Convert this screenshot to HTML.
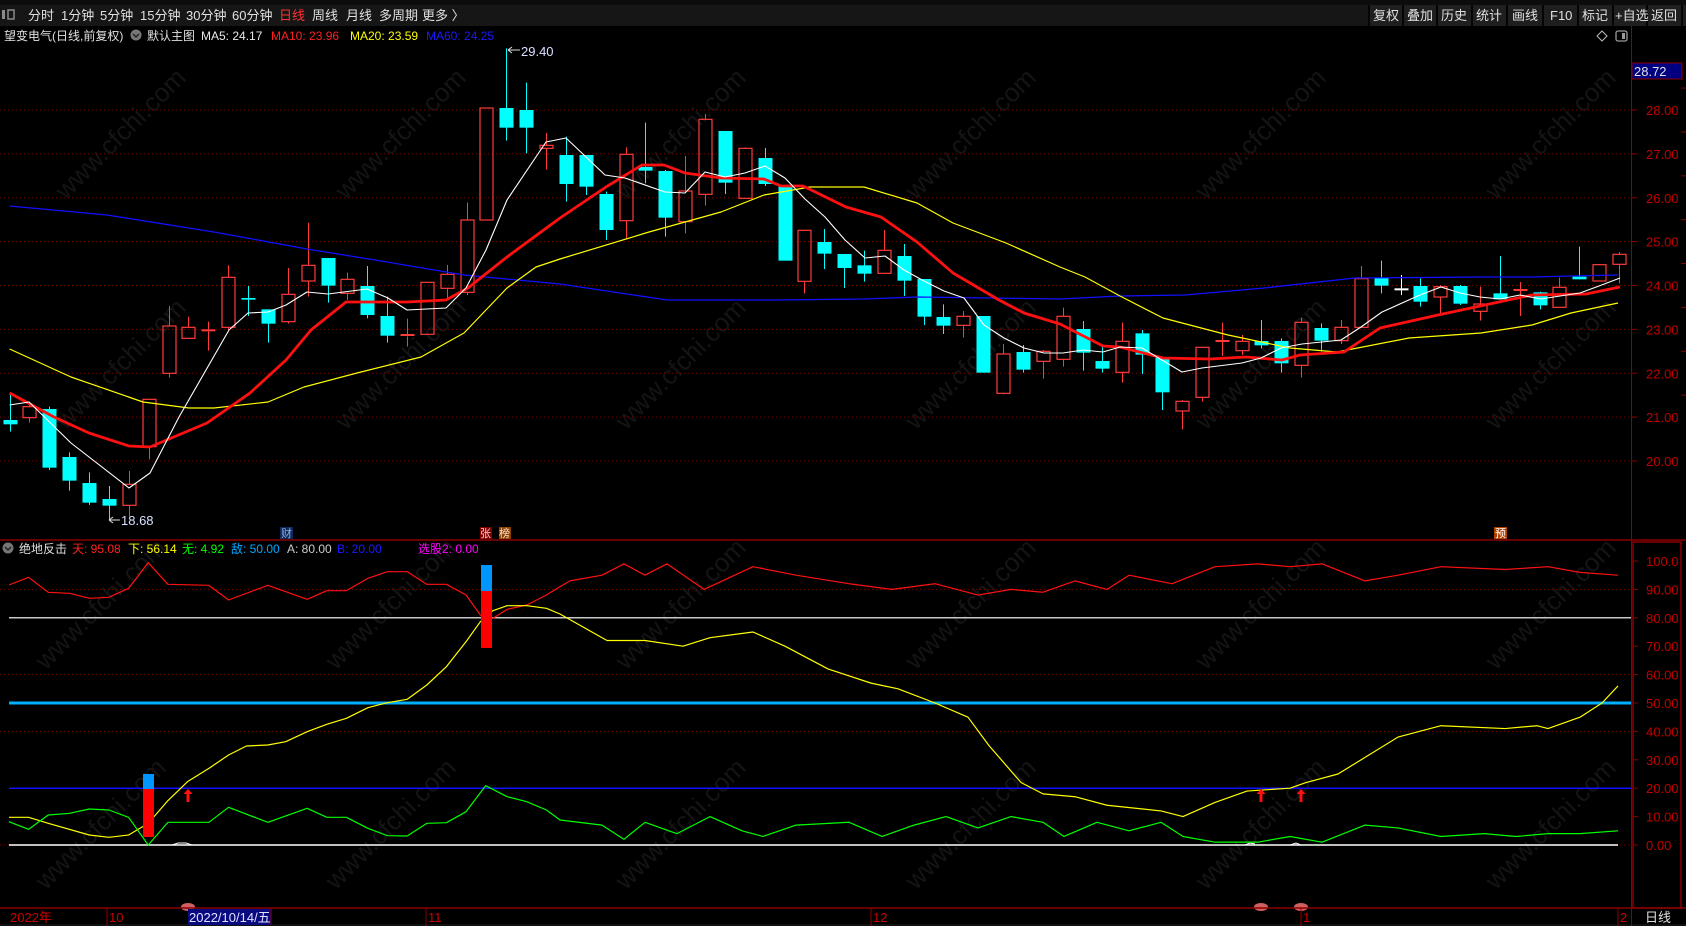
<!DOCTYPE html>
<html><head><meta charset="utf-8">
<style>
html,body{margin:0;padding:0;background:#000;width:1686px;height:926px;overflow:hidden}
svg{display:block}
text{font-family:"Liberation Sans","Noto Sans CJK SC",sans-serif}
</style></head><body>
<svg id="s" width="1686" height="926" viewBox="0 0 1686 926" xmlns="http://www.w3.org/2000/svg">
<rect width="1686" height="926" fill="#000"/>
<rect x="0" y="0" width="1686" height="5" fill="#0c0c0c"/>
<rect x="0" y="5" width="1686" height="21" fill="#161616"/>
<rect x="1369" y="5" width="317" height="21" fill="#1f1f1f"/>
<g stroke="#050505" stroke-width="2">
<line x1="1369" y1="5" x2="1369" y2="26"/><line x1="1403" y1="5" x2="1403" y2="26"/><line x1="1437" y1="5" x2="1437" y2="26"/><line x1="1472" y1="5" x2="1472" y2="26"/><line x1="1507" y1="5" x2="1507" y2="26"/><line x1="1543" y1="5" x2="1543" y2="26"/><line x1="1578" y1="5" x2="1578" y2="26"/><line x1="1613" y1="5" x2="1613" y2="26"/><line x1="1647" y1="5" x2="1647" y2="26"/><line x1="1682" y1="5" x2="1682" y2="26"/>
</g>
<g fill="#8a8a8a"><rect x="2" y="10" width="3" height="9"/><rect x="8" y="10" width="6" height="9" fill="none" stroke="#8a8a8a" stroke-width="1.5"/></g>
<g font-size="13" fill="#e0e0e0">
<text x="28" y="20">分时</text><text x="61" y="20">1分钟</text><text x="100" y="20">5分钟</text><text x="140" y="20">15分钟</text><text x="186" y="20">30分钟</text><text x="232" y="20">60分钟</text><text x="279" y="20" fill="#ff3030">日线</text><text x="312" y="20">周线</text><text x="346" y="20">月线</text><text x="379" y="20">多周期</text><text x="422" y="20">更多 〉</text>
<text x="1373" y="20">复权</text><text x="1407" y="20">叠加</text><text x="1441" y="20">历史</text><text x="1476" y="20">统计</text><text x="1512" y="20">画线</text><text x="1550" y="20">F10</text><text x="1582" y="20">标记</text><text x="1615" y="20">+自选</text><text x="1651" y="20">返回</text>
</g>
<g font-size="12">
<text x="4" y="40" fill="#e0e0e0">望变电气(日线,前复权)</text>
<circle cx="136" cy="35" r="5.5" fill="#777"/><path d="M133 34l3 3 3-3" stroke="#222" stroke-width="1.5" fill="none"/>
<text x="147" y="40" fill="#e0e0e0">默认主图</text>
<text x="201" y="40" fill="#e8e8e8">MA5: 24.17</text>
<text x="271" y="40" fill="#ff2020">MA10: 23.96</text>
<text x="350" y="40" fill="#ffff00">MA20: 23.59</text>
<text x="426" y="40" fill="#1a1aff">MA60: 24.25</text>
</g>
<path d="M1602 31l5 5-5 5-5-5z" fill="none" stroke="#bbb" stroke-width="1"/>
<rect x="1616" y="31" width="11" height="10" rx="2" fill="none" stroke="#999" stroke-width="1.3"/><rect x="1622" y="33" width="3" height="6" fill="#999"/>
<g id="wm" font-size="26" fill="#141414"></g>
<g id="grid"></g>
<g id="main"></g>
<g id="ind"></g>
<line x1="1631.5" y1="26" x2="1631.5" y2="926" stroke="#8b0000" stroke-width="1"/>
<line x1="0" y1="540" x2="1686" y2="540" stroke="#8b0000" stroke-width="1.5"/>
<rect x="1632" y="63" width="50" height="16" fill="#000080" stroke="#8b0000" stroke-width="1"/>
<text x="1634" y="76" font-size="13" fill="#e0e0e0">28.72</text>
<rect x="1633" y="542" width="48" height="366" fill="none" stroke="#8b0000" stroke-width="1.5"/>
<line x1="0" y1="908" x2="1686" y2="908" stroke="#8b0000" stroke-width="1.5"/>
<line x1="0" y1="925" x2="1686" y2="925" stroke="#222" stroke-width="1"/>
<g font-size="13" fill="#cc0000">
<text x="10" y="922">2022年</text>
<line x1="107" y1="908" x2="107" y2="926" stroke="#8b0000"/><text x="109" y="922">10</text>
<line x1="426" y1="908" x2="426" y2="926" stroke="#8b0000"/><text x="428" y="922">11</text>
<line x1="871" y1="908" x2="871" y2="926" stroke="#8b0000"/><text x="873" y="922">12</text>
<line x1="1301" y1="908" x2="1301" y2="926" stroke="#8b0000"/><text x="1303" y="922">1</text>
<line x1="1618" y1="908" x2="1618" y2="926" stroke="#8b0000"/><text x="1620" y="922">2</text>
</g>
<rect x="188" y="909" width="83" height="16" fill="#0a0a80"/><line x1="271" y1="909" x2="271" y2="925" stroke="#8b0000"/>
<text x="189" y="922" font-size="13" fill="#e0e0ff">2022/10/14/五</text>
<text x="1645" y="922" font-size="13" fill="#e0e0e0">日线</text>
<rect x="280" y="527" width="13" height="12" fill="#0a2a5a"/><text x="281" y="537" font-size="11" fill="#9ad">财</text>
<rect x="480" y="527" width="12" height="12" fill="#800000"/><text x="480" y="537" font-size="11" fill="#fcc">张</text>
<rect x="499" y="527" width="12" height="12" fill="#8a4000"/><text x="499" y="537" font-size="11" fill="#fdc">榜</text>
<rect x="1494" y="527" width="13" height="12" fill="#b04000"/><text x="1495" y="537" font-size="11" fill="#fff">预</text>
<path d="M508 50h12 M508 50l4-3 M508 50l4 3" stroke="#ddd" fill="none" stroke-width="1"/>
<text x="521" y="56" font-size="13" fill="#d8e0ff">29.40</text>
<path d="M109 520h11 M109 520l4-3 M109 520l4 3" stroke="#ddd" fill="none" stroke-width="1"/>
<text x="121" y="525" font-size="13" fill="#d8e0ff">18.68</text>
<g font-size="12">
<circle cx="8" cy="548" r="5.5" fill="#777"/><path d="M5 547l3 3 3-3" stroke="#222" stroke-width="1.5" fill="none"/>
<text x="19" y="553" fill="#e0e0e0">绝地反击</text>
<text x="72" y="553" fill="#ff2020">天: 95.08</text>
<text x="128" y="553" fill="#ffff00">下: 56.14</text>
<text x="182" y="553" fill="#00ff00">无: 4.92</text>
<text x="231" y="553" fill="#00a8ff">敌: 50.00</text>
<text x="287" y="553" fill="#cccccc">A: 80.00</text>
<text x="337" y="553" fill="#1a1aff">B: 20.00</text>
<text x="418" y="553" fill="#ff00ff">选股2: 0.00</text>
</g>
</svg>
<script>
(function(){
var NS="http://www.w3.org/2000/svg";
function el(p,t,a,txt){var e=document.createElementNS(NS,t);for(var k in a)e.setAttribute(k,a[k]);if(txt!=null)e.textContent=txt;p.appendChild(e);return e;}
var grid=document.getElementById('grid'),main=document.getElementById('main'),ind=document.getElementById('ind'),wm=document.getElementById('wm');
var wp=[[20,170],[300,170],[580,170],[870,170],[1160,170],[1450,170],[20,400],[300,400],[580,400],[870,400],[1160,400],[1450,400],[0,640],[290,640],[580,640],[870,640],[1160,640],[1450,640],[0,860],[290,860],[580,860],[870,860],[1160,860],[1450,860]];
wp.forEach(function(p){el(wm,'text',{x:p[0],y:p[1],transform:'rotate(-45 '+(p[0]+60)+' '+(p[1]-40)+')'},'www.cfchi.com');});
function py(p){return 110+(28-p)*43.875;}
for(var p=28;p>=20;p--){var y=py(p);el(grid,'line',{x1:0,y1:y,x2:1631,y2:y,stroke:'#7a0000','stroke-dasharray':'1 3'});
el(grid,'line',{x1:1631,y1:y,x2:1637,y2:y,stroke:'#8b0000'});
el(grid,'text',{x:1646,y:y+5,'font-size':13,fill:'#c00000'},p.toFixed(2));}
[21.5,22.5,23.5,24.5,25.5,26.5,27.5,28.5].forEach(function(p){el(grid,'line',{x1:1681,y1:py(p),x2:1686,y2:py(p),stroke:'#8b0000'});});
function iy(v){return 845-2.84*v;}
[100,90,80,70,60,50,40,30,20,10,0].forEach(function(v){var y=iy(v);
el(grid,'line',{x1:1633,y1:y,x2:1638,y2:y,stroke:'#8b0000'});
el(grid,'text',{x:1646,y:y+5,'font-size':13,fill:'#c00000'},v==100?'100.0':v.toFixed(2));});
[90,60,40,0].forEach(function(v){el(grid,'line',{x1:0,y1:iy(v),x2:1631,y2:iy(v),stroke:'#7a0000','stroke-dasharray':'1 3'});});
var C=[['d',1140,1153,1065,1175],['u',1100,1133,1085,1148],['d',1107,1283,1100,1290],['d',1251,1322,1237,1352],['d',1329,1388,1297,1395],['d',1377,1397,1338,1440],['u',1333,1396,1293,1430],['u',1078,1220,1078,1258],['u',858,1000,798,1013],['u',862,895,830,895],['u',868,874,845,932],['u',712,862,676,870],['d',774,779,738,828],['d',808,851,808,908],['u',763,845,684,851],['u',676,723,548,770],['d',654,737,654,788],['u',718,760,698,780],['d',738,825,678,835],['d',828,887,770,908],['u',882,889,836,920],['u',727,883,727,883],['u',703,745,675,780],['u',540,757,488,765],['u',204,540,204,540],['d',204,263,25,302],['d',210,263,128,340],['u',316,325,279,389],
['d',345,432,290,485],['d',345,440,345,465],['d',462,570,455,600],['u',343,542,322,598],['d',381,392,248,430],['d',393,533,390,590],['u',453,545,348,580],['u',238,463,222,497],['d',273,428,273,462],['u',325,475,322,475],['d',354,432,324,438],['d',440,662,440,662],['u',571,724,571,760],['d',606,641,567,687],['d',642,684,642,744],['d',676,701,632,725],['u',631,700,570,700],['d',648,722,612,768],['d',717,830,717,855],['d',831,857,793,882],['u',829,856,813,893],['d',828,998,828,998],['u',942,1060,912,1063],['d',936,989,915,998],['u',934,964,930,1016],['u',829,958,803,980],['d',867,938,843,992],['d',963,986,920,998],
['u',904,997,848,1028],['d',880,944,870,1002],['d',952,1057,952,1110],['u',1084,1113,1080,1168],['u',922,1072,922,1085],['u',900,905,848,948],['u',904,932,885,945],['d',903,916,840,925],['d',903,970,895,998],['u',847,976,833,1013],['d',864,902,850,935],['u',862,902,840,912],['u',716,862,678,862],['d',713,737,662,760],['w',745,748,705,765],['d',738,785,715,800],['u',740,771,735,820],['d',738,791,735,795],['u',792,814,740,842],['d',760,778,648,778],['u',747,751,726,828],['d',757,796,755,808],['u',742,802,713,802],['d',710,718,620,718],['u',674,723,672,723],['u',643,673,636,730]];
C.forEach(function(c,i){var x=Math.round(9.6+19.87*i)+0.5;var t=40+c[1]/3,b=40+c[2]/3,h=40+c[3]/3,l=40+c[4]/3;
var col=c[0]=='d'?'#00ffff':(c[0]=='w'?'#ffffff':'#ff3a3a');
var bh=Math.max(b-t,1.5);
if(c[0]=='d'){el(main,'line',{x1:x,y1:h,x2:x,y2:l,stroke:col,'stroke-width':1});el(main,'rect',{x:x-7,y:t,width:14,height:bh,fill:col});}
else{el(main,'line',{x1:x,y1:h,x2:x,y2:t,stroke:col});el(main,'line',{x1:x,y1:t+bh,x2:x,y2:l,stroke:col});
if(bh<3)el(main,'rect',{x:x-7,y:t,width:14,height:2,fill:col});else el(main,'rect',{x:x-6.5,y:t,width:13,height:bh,fill:'none',stroke:col,'stroke-width':1.2});}});
function pl(g,pts,col,w){el(g,'polyline',{points:pts.map(function(p){return p.join(',')}).join(' '),fill:'none',stroke:col,'stroke-width':w,'stroke-linejoin':'round'});}
pl(main,[[9.6,206],[107,215],[214,232],[307,249],[375,260],[464,275],[560,284],[667,300],[774,300],[864,299],[917,297],[989,298],[1060,299],[1120,296],[1185,295],[1264,288],[1355,278],[1481,277],[1531,277],[1571,276],[1618,275]],'#1010ff',1.3);
pl(main,[[9.6,349],[71,377],[143,402],[189,408],[214,408],[268,402],[304,387],[357,373],[421,357],[464,333],[507,288],[536,267],[560,259],[649,232],[721,212],[764,195],[810,187],[864,187],[917,203],[953,223],[1006,243],[1060,267],[1085,277],[1120,296],[1163,318],[1228,335],[1290,348],[1337,352],[1409,338],[1481,333],[1532,325],[1571,313],[1618,303]],'#ffff00',1.2);
pl(main,[[9.6,393],[54,417],[89,433],[129,446],[150,447],[207,423],[250,393],[286,360],[311,330],[346,302],[407,302],[446,300],[468,288],[507,257],[560,218],[606,187],[642,165],[664,165],[685,173],[721,178],[764,179],[781,186],[803,186],[846,207],[881,217],[917,242],[953,273],[999,300],[1024,313],[1060,324],[1103,346],[1120,347],[1163,358],[1210,359],[1246,357],[1282,360],[1300,355],[1344,352],[1380,328],[1438,315],[1499,302],[1532,295],[1586,294],[1620,287]],'#ff1010',2.8);
pl(main,[[9.6,405],[29,402],[71,443],[129,488],[150,473],[179,417],[229,330],[248,313],[268,312],[286,305],[307,292],[328,294],[367,289],[388,298],[407,310],[446,308],[466,288],[486,250],[507,200],[546,142],[566,138],[605,175],[625,178],[665,192],[685,193],[705,172],[725,177],[745,173],[765,166],[785,178],[805,199],[825,217],[845,240],[865,258],[885,256],[904,270],[924,281],[944,291],[964,298],[984,325],[1004,338],[1024,348],[1044,353],[1063,353],[1083,350],[1103,352],[1120,347],[1142,348],[1182,372],[1202,368],[1242,363],[1261,358],[1281,348],[1302,344],[1341,340],[1361,327],[1382,312],[1420,295],[1441,287],[1460,293],[1480,297],[1500,299],[1520,295],[1541,299],[1560,296],[1580,293],[1599,286],[1620,278]],'#ffffff',1.1);
el(ind,'line',{x1:9,y1:iy(80),x2:1631,y2:iy(80),stroke:'#c8c8c8','stroke-width':1.5});
el(ind,'line',{x1:9,y1:iy(50),x2:1631,y2:iy(50),stroke:'#00b0ff','stroke-width':3});
el(ind,'line',{x1:9,y1:iy(20),x2:1631,y2:iy(20),stroke:'#1010ff','stroke-width':1.5});
el(ind,'line',{x1:9,y1:iy(0),x2:1618,y2:iy(0),stroke:'#ffffff','stroke-width':1.5});
el(ind,'path',{d:'M172 845l6-2h8l6 2 M1245 845l5-2 5 1 M1290 845l6-2 5 2',stroke:'#fff',fill:'none'});
function zz(arr){return arr.map(function(p){return [p[0]/2.8,560+p[1]/3];});}
function rv(arr){return arr.map(function(p){return [p[0],iy(p[1])];});}
var red=zz([[25,75],[80,52],[135,97],[195,100],[250,115],[305,112],[360,85],[415,8],[470,73],[585,76],[640,120],[750,76],[860,118],[915,92],[970,92],[1030,55],[1085,35],[1140,35],[1195,73],[1250,73],[1305,105],[1345,165],[1380,175],[1420,148],[1475,135],[1530,105],[1568,80]]).concat(rv([[570,93],[602,95],[624,99],[645,95],[667,99],[704,90],[753,98],[796,95],[849,92],[892,90],[935,92],[978,88],[1011,90],[1043,89],[1075,93],[1107,90],[1129,95],[1172,92],[1215,98],[1258,99],[1290,98],[1322,99],[1365,93],[1398,95],[1441,98],[1505,97],[1548,98],[1580,96],[1618,95]]));
var yel=zz([[25,772],[80,772],[135,790],[250,825],[305,832],[360,825],[415,790],[470,722],[525,665],[585,625],[640,585],[690,558],[750,555],[800,545],[860,515],[915,493],[970,475],[1030,443],[1085,428],[1140,418],[1195,375],[1250,320],[1305,245],[1345,185],[1380,152],[1420,137],[1475,137],[1530,145],[1568,162]]).concat(rv([[607,72],[645,72],[683,70],[710,73],[753,75],[785,70],[828,62],[871,57],[898,55],[935,50],[968,45],[989,35],[1021,22],[1043,18],[1075,17],[1107,14],[1161,12],[1183,10],[1215,15],[1247,19],[1290,20],[1306,22],[1338,25],[1398,38],[1441,42],[1505,41],[1537,42],[1548,41],[1580,45],[1602,50],[1618,56]]));
var grn=zz([[25,785],[80,808],[135,765],[195,760],[250,747],[305,750],[360,772],[415,855],[470,787],[585,787],[640,742],[750,787],[860,745],[915,772],[970,772],[1030,805],[1085,827],[1140,828],[1195,790],[1250,788],[1305,755],[1360,677],[1420,710],[1475,725],[1530,750],[1568,780]]).concat(rv([[602,7],[624,2],[645,8],[677,4],[710,10],[742,5],[763,3],[796,7],[849,8],[882,3],[914,7],[946,10],[978,6],[1011,10],[1043,8],[1064,3],[1097,8],[1129,5],[1161,8],[1183,3],[1215,1],[1258,1],[1290,3],[1322,1],[1365,7],[1398,6],[1441,3],[1484,4],[1516,3],[1548,4],[1580,4],[1618,5]]));
pl(ind,red,'#ff1010',1.2);pl(ind,yel,'#ffff00',1.2);pl(ind,grn,'#00ff00',1.2);
el(ind,'rect',{x:143,y:774,width:11,height:15,fill:'#0096ff'});el(ind,'rect',{x:143,y:789,width:11,height:48,fill:'#ff0000'});
el(ind,'rect',{x:481,y:565,width:11,height:26,fill:'#0096ff'});el(ind,'rect',{x:481,y:591,width:11,height:57,fill:'#ff0000'});
[188,1261,1301].forEach(function(x){el(ind,'path',{d:'M'+x+' 789l-4.5 5h3v8h3v-8h3z',fill:'#ff1010'});});
[188,1261,1301].forEach(function(x){el(ind,'ellipse',{cx:x,cy:907,rx:7,ry:4,fill:'#d06060'});});
})();
</script>
</body></html>
